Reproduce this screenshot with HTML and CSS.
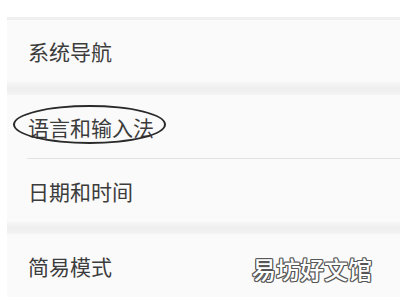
FILE: index.html
```html
<!DOCTYPE html>
<html lang="zh-CN">
  <head>
    <meta charset="UTF-8" />
    <meta name="viewport" content="width=device-width, initial-scale=1.0" />
    <title>设置</title>
    <link rel="stylesheet" href="styles.css">
  </head>
  <body>
    <div class="page">
      <div class="top"></div>
      <div class="panel">
        <div class="group">
          <div class="item first">系统导航</div>
        </div>
        <div class="gap"></div>
        <div class="group">
          <div class="item mark">
            语言和输入法
            <span class="circle"></span>
          </div>
          <div class="line"></div>
          <div class="item">日期和时间</div>
        </div>
        <div class="gap"></div>
        <div class="group">
          <div class="item">简易模式</div>
        </div>
      </div>
      <div class="water">易坊好文馆</div>
    </div>
  </body>
</html>
```

FILE: styles.css
```css
* {
  margin: 0;
  padding: 0;
}
body {
  background: #fff;
  font-family: "Noto Sans CJK SC", "Noto Sans", sans-serif;
  color: #3c3c3c;
}
.page {
  width: 400px;
  height: 300px;
  overflow: hidden;
  position: relative;
}
.top {
  height: 17px;
}
.panel {
  margin-left: 7px;
  border-top: 3px solid #efefef;
}
.group {
  background: #fafafa;
}
.item {
  height: 63px;
  display: flex;
  align-items: center;
  padding-left: 21px;
  font-size: 21px;
}
.item.first {
  height: 62px;
}
.mark {
  position: relative;
}
.circle {
  position: absolute;
  left: 6px;
  top: 10px;
  width: 149px;
  height: 35px;
  border: 2px solid #2a2a2a;
  border-radius: 50%;
}
.line {
  height: 1px;
  margin-left: 20px;
  background: #e2e2e2;
}
.gap {
  height: 12px;
  background: linear-gradient(#f6f6f6, #eeeeee 50%, #f4f4f4);
}
.group:nth-of-type(1) + .gap {
  height: 13px;
}
.water {
  position: absolute;
  left: 252px;
  top: 251px;
  font-size: 24px;
  font-weight: 500;
  color: #fff;
  text-shadow: 1px 0 #555, -1px 0 #555, 0 1px #555, 0 -1px #555,
    1px 1px #666, -1px -1px #666, 1px -1px #666, -1px 1px #666;
}
```
